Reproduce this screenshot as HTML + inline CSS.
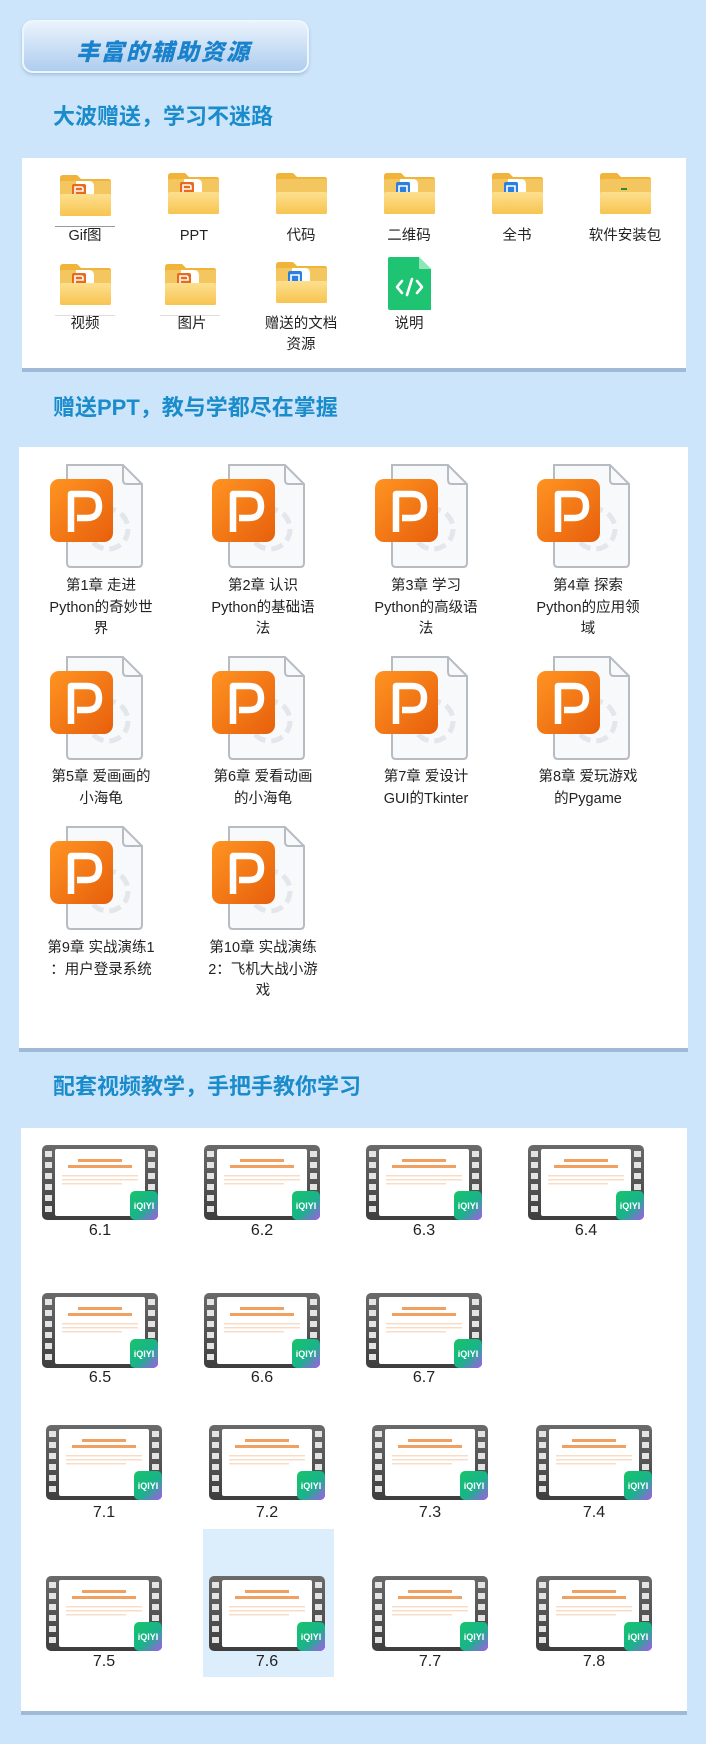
<!DOCTYPE html>
<html><head><meta charset="utf-8">
<style>
*{margin:0;padding:0;box-sizing:border-box}
body{width:706px;height:1744px;background:#cde5fa;position:relative;overflow:hidden;font-family:"Liberation Sans","Noto Sans CJK SC",sans-serif;color:#222}
.a{position:absolute}
.btn{left:22px;top:20px;width:287px;height:53px;border-radius:11px;border:2px solid #eef6fd;background:linear-gradient(#eaf3fc 0%,#cfe2f6 45%,#aecdee 100%);box-shadow:0 2px 3px rgba(90,130,180,.35)}
.btn span{position:absolute;left:52px;top:11px;font-size:23px;font-weight:900;font-style:italic;color:#1a82cc;letter-spacing:2px}
.h{font-size:22px;font-weight:bold;color:#1a8ccc;left:53px;line-height:26px}
.panel{background:#fff;box-shadow:0 4px 0 #9fbad6}
.fl{width:110px;text-align:center;font-size:14.5px;line-height:21px}
.pl{width:140px;text-align:center;font-size:14.5px;line-height:21.5px}
.vl{width:60px;text-align:center;font-size:16px;line-height:20px}
svg.i{position:absolute;overflow:visible}
</style></head><body>
<svg width="0" height="0" style="position:absolute">
<defs>
<linearGradient id="fg" x1="0" y1="0" x2="0" y2="1"><stop offset="0" stop-color="#fde08e"/><stop offset="1" stop-color="#f7c451"/></linearGradient>
<linearGradient id="og" x1="0" y1="0" x2="1" y2="1"><stop offset="0" stop-color="#ff9422"/><stop offset="1" stop-color="#e75f0c"/></linearGradient>
<linearGradient id="qg" x1="0" y1="0" x2="1" y2="1"><stop offset="0" stop-color="#17c46a"/><stop offset=".55" stop-color="#19b38a"/><stop offset="1" stop-color="#a659ea"/></linearGradient>
<linearGradient id="filmg" x1="0" y1="0" x2="0" y2="1"><stop offset="0" stop-color="#6a6a6a"/><stop offset="1" stop-color="#3e3e3e"/></linearGradient>
<symbol id="fb" viewBox="0 0 53 41"><path d="M1 3Q1 0 4 0H18L22 4H50Q52 4 52 7V39Q52 41 50 41H3Q1 41 1 39Z" fill="#f0b43a"/><rect x="1" y="6" width="51" height="35" rx="2" fill="#f3c660"/></symbol>
<symbol id="ff" viewBox="0 0 53 41"><rect x="1" y="19" width="51" height="22" rx="2" fill="url(#fg)"/></symbol>
<symbol id="po" viewBox="0 0 53 41"><path d="M17 6H30Q35 6 35 12V19H17Z" fill="#fff"/><rect x="13" y="9" width="14" height="13" rx="2" fill="#e96a1a"/><path d="M16 19V12H22Q24 12 24 14V16H17" fill="none" stroke="#fff" stroke-width="1.6"/></symbol>
<symbol id="pb" viewBox="0 0 53 41"><path d="M17 6H30Q35 6 35 12V19H17Z" fill="#fff"/><rect x="13" y="9" width="14" height="13" rx="2" fill="#2a7fe0"/><path d="M16 19V13H24V19" fill="none" stroke="#fff" stroke-width="1.6"/></symbol>
<symbol id="ppt" viewBox="0 0 94 106"><path d="M17 2H73L92 21V100Q92 104 88 104H21Q17 104 17 100Z" fill="#f7f9fb" stroke="#b7bcc3" stroke-width="2"/><path d="M73 2V17Q73 21 77 21H92" fill="none" stroke="#b7bcc3" stroke-width="2"/><circle cx="58" cy="66" r="20" fill="none" stroke="#e3e6ea" stroke-width="5" stroke-dasharray="12 6"/><rect x="0" y="16" width="63" height="63" rx="9" fill="url(#og)"/><path d="M21 69V31H37Q49 31 49 43Q49 55 37 55H27" fill="none" stroke="#fff" stroke-width="6.5" stroke-linejoin="round"/></symbol>
<symbol id="film" viewBox="0 0 116 75"><rect x="0" y="0" width="116" height="75" rx="5" fill="url(#filmg)"/><rect x="13" y="4" width="90" height="67" rx="2" fill="#fff"/><g fill="#e4e4e4"><rect x="3" y="6" width="7" height="6"/><rect x="3" y="17" width="7" height="6"/><rect x="3" y="28" width="7" height="6"/><rect x="3" y="39" width="7" height="6"/><rect x="3" y="50" width="7" height="6"/><rect x="3" y="61" width="7" height="6"/><rect x="106" y="6" width="7" height="6"/><rect x="106" y="17" width="7" height="6"/><rect x="106" y="28" width="7" height="6"/><rect x="106" y="39" width="7" height="6"/><rect x="106" y="50" width="7" height="6"/><rect x="106" y="61" width="7" height="6"/></g><g fill="#f0a060"><rect x="36" y="14" width="44" height="3"/><rect x="26" y="20" width="64" height="3"/></g><g fill="#f8dcc6"><rect x="20" y="30" width="76" height="1.5"/><rect x="20" y="34" width="76" height="1.5"/><rect x="20" y="38" width="60" height="1.5"/></g><rect x="88" y="46" width="28" height="29" rx="5" fill="url(#qg)"/><text x="102" y="64" font-size="9" font-weight="bold" fill="#fff" text-anchor="middle" font-family="Liberation Sans,sans-serif">iQIYI</text></symbol>
</defs></svg>

<div class="a btn"><span>丰富的辅助资源</span></div>
<div class="a h" style="top:104px">大波赠送，学习不迷路</div>

<div class="a panel" style="left:22px;top:158px;width:664px;height:210px"></div>
<svg class="i" style="left:59px;top:175px" width="53" height="41"><use href="#fb"/><use href="#po"/><use href="#ff"/></svg>
<svg class="i" style="left:167px;top:173px" width="53" height="41"><use href="#fb"/><use href="#po"/><use href="#ff"/></svg>
<svg class="i" style="left:275px;top:173px" width="53" height="41"><use href="#fb"/><use href="#ff"/></svg>
<svg class="i" style="left:383px;top:173px" width="53" height="41"><use href="#fb"/><use href="#pb"/><use href="#ff"/></svg>
<svg class="i" style="left:491px;top:173px" width="53" height="41"><use href="#fb"/><use href="#pb"/><use href="#ff"/></svg>
<svg class="i" style="left:599px;top:173px" width="53" height="41"><use href="#fb"/><rect x="22" y="15" width="6" height="2" fill="#2a8a3a"/><use href="#ff"/></svg>
<div class="a" style="left:55px;top:226px;width:60px;height:1px;background:#999"></div>
<div class="a fl" style="left:30px;top:226px">Gif图</div>
<div class="a fl" style="left:139px;top:226px">PPT</div>
<div class="a fl" style="left:246px;top:226px">代码</div>
<div class="a fl" style="left:354px;top:226px">二维码</div>
<div class="a fl" style="left:462px;top:226px">全书</div>
<div class="a fl" style="left:570px;top:226px">软件安装包</div>
<svg class="i" style="left:59px;top:264px" width="53" height="41"><use href="#fb"/><use href="#po"/><use href="#ff"/></svg>
<svg class="i" style="left:164px;top:264px" width="53" height="41"><use href="#fb"/><use href="#po"/><use href="#ff"/></svg>
<svg class="i" style="left:275px;top:262px" width="53" height="41"><use href="#fb"/><use href="#pb"/><use href="#ff"/></svg>
<svg class="i" style="left:388px;top:257px" width="43" height="53"><path d="M2 0H31L43 12V53H2Q0 53 0 51V2Q0 0 2 0Z" fill="#1fc473"/><path d="M31 0V12H43Z" fill="#8fe6b5"/><path d="M14 24L9 30L14 36M29 24L34 30L29 36M24 22L19 38" fill="none" stroke="#fff" stroke-width="2.6" stroke-linecap="round" stroke-linejoin="round"/></svg>
<div class="a" style="left:55px;top:315px;width:60px;height:1px;background:#ddd"></div>
<div class="a" style="left:160px;top:315px;width:60px;height:1px;background:#ddd"></div>
<div class="a fl" style="left:30px;top:314px">视频</div>
<div class="a fl" style="left:137px;top:314px">图片</div>
<div class="a fl" style="left:246px;top:314px">赠送的文档<br>资源</div>
<div class="a fl" style="left:354px;top:314px">说明</div>

<div class="a h" style="top:395px">赠送PPT，教与学都尽在掌握</div>
<div class="a panel" style="left:19px;top:447px;width:669px;height:601px"></div>
<svg class="i" style="left:50px;top:463px" width="94" height="106"><use href="#ppt"/></svg>
<svg class="i" style="left:212px;top:463px" width="94" height="106"><use href="#ppt"/></svg>
<svg class="i" style="left:375px;top:463px" width="94" height="106"><use href="#ppt"/></svg>
<svg class="i" style="left:537px;top:463px" width="94" height="106"><use href="#ppt"/></svg>
<div class="a pl" style="left:31px;top:576px">第1章 走进<br>Python的奇妙世<br>界</div>
<div class="a pl" style="left:193px;top:576px">第2章 认识<br>Python的基础语<br>法</div>
<div class="a pl" style="left:356px;top:576px">第3章 学习<br>Python的高级语<br>法</div>
<div class="a pl" style="left:518px;top:576px">第4章 探索<br>Python的应用领<br>域</div>
<svg class="i" style="left:50px;top:655px" width="94" height="106"><use href="#ppt"/></svg>
<svg class="i" style="left:212px;top:655px" width="94" height="106"><use href="#ppt"/></svg>
<svg class="i" style="left:375px;top:655px" width="94" height="106"><use href="#ppt"/></svg>
<svg class="i" style="left:537px;top:655px" width="94" height="106"><use href="#ppt"/></svg>
<div class="a pl" style="left:31px;top:767px">第5章 爱画画的<br>小海龟</div>
<div class="a pl" style="left:193px;top:767px">第6章 爱看动画<br>的小海龟</div>
<div class="a pl" style="left:356px;top:767px">第7章 爱设计<br>GUI的Tkinter</div>
<div class="a pl" style="left:518px;top:767px">第8章 爱玩游戏<br>的Pygame</div>
<svg class="i" style="left:50px;top:825px" width="94" height="106"><use href="#ppt"/></svg>
<svg class="i" style="left:212px;top:825px" width="94" height="106"><use href="#ppt"/></svg>
<div class="a pl" style="left:31px;top:938px">第9章 实战演练1<br>：用户登录系统</div>
<div class="a pl" style="left:193px;top:938px">第10章 实战演练<br>2：飞机大战小游<br>戏</div>

<div class="a h" style="top:1074px">配套视频教学，手把手教你学习</div>
<div class="a panel" style="left:21px;top:1128px;width:666px;height:583px"></div>
<div class="a" style="left:203px;top:1529px;width:131px;height:148px;background:#dcedfb"></div>
<svg class="i" style="left:42px;top:1145px" width="116" height="75"><use href="#film"/></svg>
<svg class="i" style="left:204px;top:1145px" width="116" height="75"><use href="#film"/></svg>
<svg class="i" style="left:366px;top:1145px" width="116" height="75"><use href="#film"/></svg>
<svg class="i" style="left:528px;top:1145px" width="116" height="75"><use href="#film"/></svg>
<div class="a vl" style="left:70px;top:1221px">6.1</div>
<div class="a vl" style="left:232px;top:1221px">6.2</div>
<div class="a vl" style="left:394px;top:1221px">6.3</div>
<div class="a vl" style="left:556px;top:1221px">6.4</div>
<svg class="i" style="left:42px;top:1293px" width="116" height="75"><use href="#film"/></svg>
<svg class="i" style="left:204px;top:1293px" width="116" height="75"><use href="#film"/></svg>
<svg class="i" style="left:366px;top:1293px" width="116" height="75"><use href="#film"/></svg>
<div class="a vl" style="left:70px;top:1368px">6.5</div>
<div class="a vl" style="left:232px;top:1368px">6.6</div>
<div class="a vl" style="left:394px;top:1368px">6.7</div>
<svg class="i" style="left:46px;top:1425px" width="116" height="75"><use href="#film"/></svg>
<svg class="i" style="left:209px;top:1425px" width="116" height="75"><use href="#film"/></svg>
<svg class="i" style="left:372px;top:1425px" width="116" height="75"><use href="#film"/></svg>
<svg class="i" style="left:536px;top:1425px" width="116" height="75"><use href="#film"/></svg>
<div class="a vl" style="left:74px;top:1503px">7.1</div>
<div class="a vl" style="left:237px;top:1503px">7.2</div>
<div class="a vl" style="left:400px;top:1503px">7.3</div>
<div class="a vl" style="left:564px;top:1503px">7.4</div>
<svg class="i" style="left:46px;top:1576px" width="116" height="75"><use href="#film"/></svg>
<svg class="i" style="left:209px;top:1576px" width="116" height="75"><use href="#film"/></svg>
<svg class="i" style="left:372px;top:1576px" width="116" height="75"><use href="#film"/></svg>
<svg class="i" style="left:536px;top:1576px" width="116" height="75"><use href="#film"/></svg>
<div class="a vl" style="left:74px;top:1652px">7.5</div>
<div class="a vl" style="left:237px;top:1652px">7.6</div>
<div class="a vl" style="left:400px;top:1652px">7.7</div>
<div class="a vl" style="left:564px;top:1652px">7.8</div>
</body></html>
